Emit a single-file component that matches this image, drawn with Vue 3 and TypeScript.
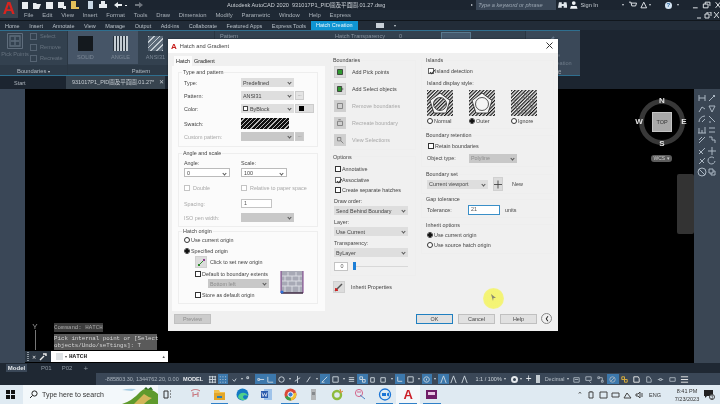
<script setup lang="ts">
const menus = ['File', 'Edit', 'View', 'Insert', 'Format', 'Tools', 'Draw', 'Dimension', 'Modify', 'Parametric', 'Window', 'Help', 'Express']
const tabs = ['Home', 'Insert', 'Annotate', 'View', 'Manage', 'Output', 'Add-ins', 'Collaborate', 'Featured Apps', 'Express Tools']
const thumbs = [
  { name: 'SOLID', cls: 'solid' },
  { name: 'ANGLE', cls: 'angle' }
]
const islands = [
  { name: 'Normal', on: false, inner: true, hatch: false },
  { name: 'Outer', on: true, inner: false, hatch: false },
  { name: 'Ignore', on: false, inner: false, hatch: true }
]
const boundaryBtns = [
  { text: 'Add Pick points', off: false, d: 'M3 3h6v6H3z', fill: '#2f9a2f' },
  { text: 'Add Select objects', off: false, d: 'M3 3h5v6H3zM8 6h2', fill: '#2f9a2f' },
  { text: 'Remove boundaries', off: true, d: 'M3 3h6v6H3z', fill: 'none' },
  { text: 'Recreate boundary', off: true, d: 'M3 4h6v5H3zM4 2h3', fill: 'none' },
  { text: 'View Selections', off: true, d: 'M3 3h4v4H3zM7 7l3 3', fill: 'none' }
]
const paletteIcons = [
  'M2 2v6M8 2v6M2 5h6', 'M2 8l6-6M6 2l2 2', 'M2 8l3-5 3 2', 'M2 2h6l-3 6z',
  'M2 8a6 6 0 0 1 6-6M5 8l3-3', 'M2 2l6 6M2 8h2', 'M2 8V3M5 8V5M8 8V2M1 8h8', 'M2 3h6M2 7h6',
  'M2 8l6-6M2 5l3-3', 'M2 2h3v3h3v3', 'M2 8l6-6M2 4l4 4', 'M5 1v8M1 5h8',
  'M2 8l6-6M3 3l4 4', 'M7 2a3.5 3.5 0 1 0 1 3', 'M1 5a4 4 0 1 0 8 0a4 4 0 1 0-8 0M2 2l6 6', 'M2 2h4v4H2zM4 6v2h4V4H6'
]
// status bar toggles, left to right; on = highlighted blue
const statusA = [
  { on: false, d: 'M1 2h8M1 5h8M1 8h8M2 1v8M5 1v8M8 1v8' },
  { on: true, d: 'M2 2h1M5 2h1M8 2h1M2 5h1M5 5h1M8 5h1M2 8h1M5 8h1M8 8h1' },
  { on: false, d: 'M4 5l2 2 2-3', caret: true },
  { on: false, d: 'M2 2h2v2H2z' },
  { on: true, d: 'M2 4h2v2H2zM4 5h5' },
  { on: true, d: 'M2 2v6h6' },
  { on: false, d: 'M2 5a3 3 0 1 0 6 0a3 3 0 1 0-6 0', caret: true },
  { on: false, d: 'M5 1v8M2 7l6-4' },
  { on: false, d: 'M3 8l4-6', caret: true },
  { on: true, d: 'M2 8l6-6M2 8h3' },
  { on: false, d: 'M2 2h6v6H2z', caret: true },
  { on: false, d: 'M2 3h6M2 5h6M2 7h6' },
  { on: true, d: 'M2 2h3v3H2zM5 5h3v3H5z' },
  { on: false, d: 'M3 3h4v5H3z' },
  { on: false, d: 'M2 3h5v5H2z', caret: true },
  { on: true, d: 'M3 2v5h5' },
  { on: false, d: 'M2 2h6v6H2z', caret: true },
  { on: true, d: 'M5 2a3 3 0 1 0 .1 0M5 4v2', caret: true },
  { on: true, d: 'M5 1L2 9M5 1l3 8' },
  { on: false, d: 'M5 1L2 9M5 1l3 8' },
  { on: false, d: 'M5 1L2 9M5 1l3 8' }
]
const statusB = [
  { on: false, d: 'M2 3h6v5H2zM3 5h4' },
  { on: false, d: 'M2 2h6v4H2zM6 7l2 2', caret: true },
  { on: false, d: 'M2 2h2v2H2zM6 6h2v2H6zM4 3h3v3' },
  { on: true, d: 'M2 5a3 3 0 1 0 6 0a3 3 0 1 0-6 0M3 7l4-4' },
  { on: false, d: 'M2 2h3v3H2zM5 5h3v3H5z', color: '#e5b53a' },
  { on: false, d: 'M2 2h5l1 2v4H2z', color: '#f0f0f0' },
  { on: false, d: 'M3 2h3l2 3v3H3z' },
  { on: false, d: 'M2 5h2M6 5h2M4 4h2v2H4z' },
  { on: false, d: 'M2 3h6v4H2z' },
  { on: false, d: 'M1 2h8M1 5h8M1 8h8', color: '#f0f0f0' }
]
const taskIcons = ['snip', 'files', 'edge', 'word', 'chrome', 'grey', 'green', 'pink', 'zoom', 'acad', 'purple']
const underlined = ['files', 'chrome', 'zoom', 'acad', 'purple']
const trayPaths = ['M2 2h4v6H2zM4 1v1', 'M1 2h7v6H1z', 'M1 3h7v4H1z', 'M1 8l3-5 4 5z', 'M1 4h2l2-2v6L3 6H1zM7 3v4']
</script>

<template>
  <div class="screen">
    <header class="titlebar">
      <div class="logo">A</div>
      <div class="qat">
        <svg width="122" height="10" viewBox="0 0 122 10" fill="#e8ecef">
          <path d="M1 2h6v7H1z" />
          <path d="M12 3h3l1 1h4l-2 5h-6z" />
          <path d="M25 2h7v7h-7z" />
          <path d="M37 2h6v6h-6zM42 6h3v3h-3z" />
          <path d="M50 1h5v8h-5zM55 7h3v2h-3z" fill="#e3c05a" />
          <path d="M67 1h5v8h-5z" fill="#c9d7e4" />
          <path d="M78 4h8v4h-8zM80 1h4v3h-4z" />
          <path d="M93 5l4-3v2h4v2h-4v2zM104 5h2v1h-2z" />
          <path d="M122 5l-4-3v2h-4v2h4v2z" opacity=".4" />
        </svg>
      </div>
      <span class="doc-title">Autodesk AutoCAD 2020&nbsp;&nbsp;931017P1_PID圖及平面圖.01.27.dwg</span>
      <span class="crumb"></span>
      <div class="search">Type a keyword or phrase</div>
      <svg class="ico-bino" width="10" height="8" viewBox="0 0 10 8" fill="#dfe5ea"><path d="M1 1h3v6H0zM6 1h3l1 6H6zM4 3h2v2H4z" /></svg>
      <svg class="ico-user" width="8" height="8" viewBox="0 0 8 8" fill="#f0f3f5"><path d="M4 0a2 2 0 0 1 0 4a2 2 0 0 1 0-4zM0 8l1-3h6l1 3z" /></svg>
      <span class="sign">Sign In</span>
      <span class="caret caret-sign"></span>
      <svg class="ico-cart" width="8" height="8" viewBox="0 0 8 8" fill="none" stroke="#e4e8ec"><path d="M0 1h2l1 4h4l1-3H2" /></svg>
      <svg class="ico-tri" width="8" height="8" viewBox="0 0 8 8" fill="none" stroke="#e4e8ec"><path d="M4 1l3 6H1z" /></svg>
      <span class="caret caret-tri"></span>
      <span class="help-dot">?</span>
      <span class="caret caret-help"></span>
      <svg class="win-btns" width="30" height="8" viewBox="0 0 30 8" fill="none" stroke="#e8ecef"><path d="M1 7h5M12 3h5v4h-5zM14 3V1h5v4M25 1l5 6M30 1l-5 6" /></svg>
    </header>

    <nav class="menubar">
      <span v-for="m in menus" :key="m">{{ m }}</span>
      <svg class="win-btns2" width="22" height="7" viewBox="0 0 22 7" fill="none" stroke="#d8dde2"><path d="M0 6h4M8 2h4v4H8zM10 2V0h4v4M17 0l5 6M22 0l-5 6" /></svg>
    </nav>

    <nav class="tabbar">
      <span v-for="t in tabs" :key="t">{{ t }}</span>
      <span class="tab-active">Hatch Creation</span>
      <svg class="cam" width="8" height="5" viewBox="0 0 8 5" fill="#c8d0d8"><path d="M0 0h8v5H0z" /></svg>
      <span class="caret"></span>
    </nav>

    <section class="ribbon">
      <div class="panel panel-bound">
        <div class="panel-body">
          <div class="pick">
            <svg width="16" height="16" viewBox="0 0 16 16" fill="none" stroke="#5f6d7c"><path d="M.5.5h15v15H.5z" /><path d="M3 3h10v10H3zM8 4v8M4 8h8" stroke-width="1.3" /></svg>
            <span>Pick Points</span>
          </div>
          <ul class="sel-list">
            <li v-for="s in ['Select', 'Remove', 'Recreate']" :key="s"><i></i>{{ s }}</li>
          </ul>
        </div>
        <div class="panel-foot">Boundaries <span class="caret"></span></div>
      </div>
      <div class="panel panel-pattern">
        <div class="thumbs">
          <div class="thumb-bg">
            <div v-for="t in thumbs" :key="t.name" class="thumb">
              <div class="swatch-img" :class="t.cls"></div>
              <span>{{ t.name }}</span>
            </div>
          </div>
          <div class="thumb">
            <div class="swatch-img ansi"></div>
            <span>ANSI31</span>
          </div>
        </div>
        <div class="panel-foot">Pattern</div>
      </div>
      <div class="panel panel-props">
        <span class="prop-a">Pattern</span>
        <span class="prop-b">Hatch Transparency</span>
        <span class="prop-c">0</span>
        <span class="prop-d"></span>
      </div>
      <div class="panel panel-close">
        <svg width="12" height="12" viewBox="0 0 12 12" fill="none" stroke="#66778a" stroke-width="2"><path d="M2 10l8-8" /></svg>
        <span>Close<br />Hatch Creation</span>
        <b>Close</b>
      </div>
    </section>

    <div class="doctabs">
      <span class="doc-start">Start</span>
      <span class="doc-active">931017P1_PID圖及平面圖.01.27* <em>✕</em></span>
    </div>

    <main class="work">
      <aside class="leftstrip"></aside>
      <div class="canvas">
        <div class="ucs">
          <span>Y</span>
          <i></i>
        </div>
        <div class="cmd-history">
          <p class="first">Command: HATCH</p>
          <p>Pick internal point or [Select<br />objects/Undo/seTtings]: T</p>
        </div>
        <div class="cmd-bar">
          <div class="cmd-tools">
            <i class="grip"></i>
            <span>✕</span>
            <svg width="8" height="8" viewBox="0 0 8 8" stroke="#f0f0f0" stroke-width="1.4" fill="none"><path d="M1 7l4-4M4 1h3v2" /></svg>
          </div>
          <div class="cmd-input">
            <i class="cmd-box"></i>
            <span class="caret dark"></span>
            <b>HATCH</b>
            <span class="up">▲</span>
          </div>
        </div>

        <div class="compass">
          <div class="ring"></div>
          <div class="cube">TOP</div>
          <b class="n">N</b>
          <b class="s">S</b>
          <b class="e">E</b>
          <b class="w">W</b>
        </div>
        <div class="wcs">WCS ▾</div>
        <div class="nav-stub"></div>
      </div>
      <aside class="palette">
        <svg v-for="(d, i) in paletteIcons" :key="i" width="10" height="10" viewBox="0 0 10 10" fill="none" stroke="#aab6c2">
          <path :d="d" />
        </svg>
      </aside>
    </main>

    <div class="layouts">
      <span class="lay-model">Model</span>
      <span>P01</span>
      <span>P02</span>
      <span class="plus">+</span>
    </div>

    <div class="status">
      <div class="status-left"></div>
      <div class="status-main">
        <span class="coords">-885803.30, 1344762.20, 0.00</span>
        <b class="model">MODEL</b>
        <template v-for="(s, i) in statusA" :key="i">
          <span class="st" :class="{ on: s.on }">
            <svg width="9" height="9" viewBox="0 0 10 10" fill="none" stroke="#cfd8e0"><path :d="s.d" /></svg>
          </span>
          <span v-if="s.caret" class="caret small"></span>
        </template>
        <span class="scale">1:1 / 100%</span>
        <span class="caret small"></span>
        <span class="gear"></span>
        <span class="caret small"></span>
        <span class="st-plus">+</span>
        <i class="slab"></i>
        <span class="decimal">Decimal</span>
        <span class="caret small"></span>
        <span v-for="(s, i) in statusB" :key="'b' + i" class="st wide" :class="{ on: s.on }">
          <svg width="9" height="9" viewBox="0 0 10 10" fill="none" :stroke="s.color || '#aab4be'"><path :d="s.d" /></svg>
        </span>
      </div>
    </div>

    <footer class="taskbar">
      <svg class="winlogo" width="9" height="9" viewBox="0 0 9 9" fill="#111"><path d="M0 0h4v4H0zM5 0h4v4H5zM0 5h4v4H0zM5 5h4v4H5z" /></svg>
      <div class="tb-search">
        <svg width="9" height="9" viewBox="0 0 9 9" fill="none" stroke="#222"><circle cx="5.5" cy="3.5" r="2.6" /><path d="M3.5 5.5L1 8" /></svg>
        <span>Type here to search</span>
        <svg class="hills" width="36" height="19" viewBox="0 0 36 19">
          <rect width="36" height="19" fill="#f4f8fa" />
          <path d="M0 5q6-2 14-1l-4 2z" fill="#a8cde3" />
          <path d="M0 19q10-3 18-12q4-4 8-3q4 0 10 5v10z" fill="#5f9a2c" />
          <path d="M12 19q6-6 10-10q4 3 8 4q-4 2-8 6z" fill="#d2b65a" />
          <path d="M22 4l2-2 2 2 3-2 2 3z" fill="#2e6a24" />
        </svg>
      </div>
      <svg class="taskview" width="9" height="9" viewBox="0 0 9 9" fill="none" stroke="#333"><path d="M1 1h4v7H1zM7 1h1M7 4h1M7 7h1" /></svg>
      <div class="apps">
        <span v-for="a in taskIcons" :key="a" class="app" :class="[a, { under: underlined.includes(a) }]">
          <svg v-if="a === 'snip'" width="13" height="13" viewBox="0 0 13 13" fill="none" stroke="#c66f77"><path d="M2 3c3-2 6-2 9 0M4 4v5M9 4v5M4 7l5-1" /></svg>
          <svg v-else-if="a === 'files'" width="13" height="13" viewBox="0 0 13 13"><path d="M1 2h5l1 2h5v2H1z" fill="#f2c14e" /><path d="M1 5h11v7H1z" fill="#e2a62a" /><path d="M4 8h5v2H4z" fill="#2a7fb8" /></svg>
          <svg v-else-if="a === 'edge'" width="13" height="13" viewBox="0 0 13 13"><circle cx="6.5" cy="6.5" r="6" fill="#1479c4" /><path d="M2 9c1-5 8-6 10-1-2-1-5-1-5 1 0 2 3 3 5 1-2 3-8 3-10-1z" fill="#4fd08a" /></svg>
          <svg v-else-if="a === 'word'" width="13" height="13" viewBox="0 0 13 13"><path d="M4 1h8v11H4z" fill="#9ec3ea" /><path d="M1 3h7v7H1z" fill="#2b5cad" /><path d="M2 4.5l1 4 1.5-3 1.5 3 1-4" fill="none" stroke="#fff" stroke-width=".7" /></svg>
          <svg v-else-if="a === 'chrome'" width="13" height="13" viewBox="0 0 13 13"><circle cx="6.5" cy="6.5" r="6" fill="#d94a3a" /><path d="M6.5 6.5L1 9a6 6 0 0 0 6 3.5z" fill="#3ca24a" /><path d="M6.5 6.5L7 12.5a6 6 0 0 0 5-8z" fill="#f1c232" /><circle cx="6.5" cy="6.5" r="2.6" fill="#3d7fd6" stroke="#fff" /></svg>
          <svg v-else-if="a === 'grey'" width="13" height="13" viewBox="0 0 13 13"><path d="M4 1h5v11H4z" fill="#b3b6b9" /><path d="M5 4h3v3H5z" fill="#85898d" /></svg>
          <svg v-else-if="a === 'green'" width="13" height="13" viewBox="0 0 13 13" fill="none"><circle cx="6" cy="7" r="4" stroke="#8dbb3b" stroke-width="2.4" /><path d="M9 1l1 3M12 3L9 5" stroke="#e0823c" /></svg>
          <svg v-else-if="a === 'pink'" width="13" height="13" viewBox="0 0 13 13" fill="none" stroke="#d4668c"><circle cx="5" cy="5" r="3.6" /><path d="M6 7l5 4" stroke="#4b82c4" /><path d="M3 4h4" /></svg>
          <svg v-else-if="a === 'zoom'" width="14" height="13" viewBox="0 0 14 13" fill="none"><circle cx="7" cy="6.5" r="5.5" stroke="#1a74d6" stroke-width="1.3" /><path d="M4 5h4v3H4zM9 5.500l2-1v4l-2-1z" fill="#1a74d6" /></svg>
          <span v-else-if="a === 'acad'" class="acad-a">A</span>
          <svg v-else width="13" height="13" viewBox="0 0 13 13"><path d="M1 2h11v9H1z" fill="#6e1e68" /><path d="M3 4h7v3H3z" fill="#e8c6e4" /></svg>
        </span>
      </div>
      <div class="tray">
        <span class="chev">⌃</span>
        <svg v-for="(d, i) in trayPaths" :key="i" width="9" height="9" viewBox="0 0 9 9" fill="none" stroke="#444"><path :d="d" /></svg>
        <span class="eng">ENG</span>
        <span class="clock">8:41 PM<br />7/23/2023</span>
        <span class="notify">
          <svg width="10" height="9" viewBox="0 0 10 9" fill="#222"><path d="M0 0h9v6H3L1 8V6H0z" /></svg>
          <em>3</em>
        </span>
      </div>
    </footer>

    <!-- dialog window -->
    <div class="dialog">
      <div class="dlg-head">
        <span class="dlg-logo">A</span>
        <span>Hatch and Gradient</span>
        <svg class="dlg-close" width="7" height="7" viewBox="0 0 7 7" stroke="#333" fill="none"><path d="M.5.500l6 6M6.500.500l-6 6" /></svg>
      </div>
      <div class="dlg-body">
        <div class="col-one">
          <div class="dtabs"><span class="dtab on">Hatch</span><span class="dtab">Gradient</span></div>
          <div class="dpanel">
            <fieldset class="group g-type">
              <legend>Type and pattern</legend>
              <div class="row"><label>Type:</label><div class="select w53">Predefined</div></div>
              <div class="row"><label>Pattern:</label><div class="select w53">ANSI31</div><i class="mini">...</i></div>
              <div class="row"><label>Color:</label><div class="select w53 colr"><u></u>ByBlock</div><i class="mini swatchbtn"><s></s></i></div>
              <div class="row swatchrow"><label>Swatch:</label><div class="swatch"></div></div>
              <div class="row off"><label>Custom pattern:</label><div class="select w53 dis"></div><i class="mini dis">...</i></div>
            </fieldset>
            <fieldset class="group g-angle">
              <legend>Angle and scale</legend>
              <div class="pair">
                <div><label>Angle:</label><div class="select box w46">0</div></div>
                <div><label>Scale:</label><div class="select box w46">100</div></div>
              </div>
              <div class="row off dbl">
                <label class="chk"><i class="cb dim"></i>Double</label>
                <label class="chk"><i class="cb dim"></i>Relative to paper space</label>
              </div>
              <div class="row off spc"><label>Spacing:</label><div class="field w31">1</div></div>
              <div class="row off"><label>ISO pen width:</label><div class="select w53 dis"></div></div>
            </fieldset>
            <fieldset class="group g-origin">
              <legend>Hatch origin</legend>
              <div class="line"><i class="rb"></i>Use current origin</div>
              <div class="line"><i class="rb on"></i>Specified origin</div>
              <div class="origin-inner">
                <div class="set-row">
                  <span class="sq-btn">
                    <svg width="9" height="9" viewBox="0 0 9 9" fill="none"><path d="M1 8l6-6" stroke="#2c8a2c" /><path d="M1 6h2v2H1z" fill="#2c8a2c" /><path d="M6 1h2v2H6z" fill="#8c3a8c" /></svg>
                  </span>
                  Click to set new origin
                </div>
                <div class="def-wrap">
                  <div class="def-left">
                    <div class="line tight"><i class="cb"></i>Default to boundary extents</div>
                    <div class="select bl dis">Bottom left</div>
                    <div class="line tight"><i class="cb"></i>Store as default origin</div>
                  </div>
                  <svg class="brick" width="24" height="24" viewBox="0 0 24 24">
                    <rect x="1" y="1" width="22" height="22" fill="#a7a9b5" />
                    <path d="M2 6h20M2 11h20M2 16h20M8 2v4M16 2v4M5 6v5M12 6v5M19 6v5M8 11v5M16 11v5M5 16v6M12 16v6M19 16v6" stroke="#dfe0e6" stroke-width=".9" fill="none" />
                    <path d="M1 1v22h22V1" stroke="#7a3a86" fill="none" />
                    <path d="M1 23h22" stroke="#222" />
                    <circle cx="2" cy="22" r="1.500" fill="#2c6fd6" />
                  </svg>
                </div>
              </div>
            </fieldset>
          </div>
        </div>

        <div class="col-two">
          <fieldset class="group g-bound">
            <legend>Boundaries</legend>
            <div v-for="b in boundaryBtns" :key="b.text" class="bound-row" :class="{ off: b.off }">
              <span class="sq-btn" :class="{ dimbtn: b.off }">
                <svg width="10" height="10" viewBox="0 0 12 12" :fill="b.fill" :stroke="b.off ? '#777' : '#333'"><path :d="b.d" /></svg>
              </span>
              {{ b.text }}
            </div>
          </fieldset>
          <fieldset class="group g-options">
            <legend>Options</legend>
            <div class="line chkline"><i class="cb"></i>Annotative</div>
            <div class="line chkline"><i class="cb ck"></i>Associative</div>
            <div class="line chkline"><i class="cb"></i>Create separate hatches</div>
            <div class="sub">Draw order:</div>
            <div class="select w74">Send Behind Boundary</div>
            <div class="sub">Layer:</div>
            <div class="select w74">Use Current</div>
            <div class="sub">Transparency:</div>
            <div class="select w74">ByLayer</div>
            <div class="trans">
              <div class="field zero">0</div>
              <div class="slider"><i></i></div>
            </div>
          </fieldset>
          <div class="inherit">
            <span class="sq-btn">
              <svg width="10" height="10" viewBox="0 0 10 10" fill="none"><path d="M1 9l7-7" stroke="#555" stroke-width="1.4" /><path d="M1 6c2 0 3 1 3 3H1z" fill="#c22" /></svg>
            </span>
            Inherit Properties
          </div>
        </div>

        <div class="col-three">
          <fieldset class="group g-islands">
            <legend>Islands</legend>
            <div class="line chkline"><i class="cb ck"></i>Island detection</div>
            <div class="sub">Island display style:</div>
            <div class="isl-row">
              <div v-for="isl in islands" :key="isl.name" class="isl">
                <svg width="26" height="26" viewBox="0 0 26 26">
                  <defs>
                    <pattern :id="'ph' + isl.name" width="2.500" height="2.500" patternUnits="userSpaceOnUse" patternTransform="rotate(45)">
                      <rect width="2.500" height="2.500" fill="#f4f4f4" />
                      <rect width="1.200" height="2.500" fill="#111" />
                    </pattern>
                  </defs>
                  <rect width="26" height="26" :fill="`url(#ph${isl.name})`" />
                  <path d="M13 3l10 7.500-4 12.500H7L3 10.500z" :fill="isl.hatch ? `url(#ph${isl.name})` : '#f4f4f4'" :stroke="isl.hatch ? '#666' : '#111'" stroke-width=".7" />
                  <circle cx="13" cy="14" r="6.500" :fill="isl.inner ? `url(#ph${isl.name})` : isl.hatch ? 'none' : '#f4f4f4'" :stroke="isl.hatch ? '#666' : '#111'" stroke-width=".7" />
                </svg>
                <div class="line isl-label"><i class="rb" :class="{ on: isl.on }"></i>{{ isl.name }}</div>
              </div>
            </div>
          </fieldset>
          <fieldset class="group g-ret">
            <legend>Boundary retention</legend>
            <div class="line chkline"><i class="cb"></i>Retain boundaries</div>
            <div class="row obj"><label>Object type:</label><div class="select dis w48">Polyline</div></div>
          </fieldset>
          <fieldset class="group g-set">
            <legend>Boundary set</legend>
            <div class="set-line">
              <div class="select w61">Current viewport</div>
              <span class="sq-btn new-btn">
                <svg width="9" height="9" viewBox="0 0 9 9" stroke="#444" fill="none"><path d="M4.500 0v9M0 4.500h9" /></svg>
              </span>
              <span class="newlab">New</span>
            </div>
          </fieldset>
          <fieldset class="group g-gap">
            <legend>Gap tolerance</legend>
            <div class="row tol"><label>Tolerance:</label><div class="field active">21</div><span>units</span></div>
          </fieldset>
          <fieldset class="group g-inh">
            <legend>Inherit options</legend>
            <div class="line"><i class="rb on"></i>Use current origin</div>
            <div class="line"><i class="rb"></i>Use source hatch origin</div>
          </fieldset>
        </div>
      </div>
      <div class="dlg-foot">
        <button class="btn dis">Preview</button>
        <span class="foot-space"></span>
        <button class="btn ok">OK</button>
        <button class="btn">Cancel</button>
        <button class="btn">Help</button>
        <span class="more">❮</span>
      </div>
    </div>

    <!-- cursor highlight from the screen recorder -->
    <div class="spot">
      <svg width="5" height="7" viewBox="0 0 5 7" fill="#8a8a70"><path d="M0 0l5 4H2.500L2 7z" /></svg>
    </div>
  </div>
</template>

<style>
html,
body {
  margin: 0;
  background: #000;
}
</style>

<style scoped>
* {
  box-sizing: border-box;
}

.screen {
  position: relative;
  width: 720px;
  height: 404px;
  overflow: hidden;
  display: flex;
  flex-direction: column;
  font-family: "Liberation Sans", Arial, "Noto Sans CJK TC", sans-serif;
  font-size: 5.4px;
  color: #333;
  background: #1c2530;
  filter: blur(0.35px);
}

.caret {
  display: inline-block;
  width: 0;
  height: 0;
  border-left: 1.5px solid transparent;
  border-right: 1.5px solid transparent;
  border-top: 2px solid #cfd5da;
}

.caret.dark {
  border-top-color: #444;
}

.caret.small {
  margin: 0 2px;
}

/* title bar */
.titlebar {
  position: relative;
  height: 10px;
  flex: none;
  display: flex;
  align-items: center;
  background: #1c2530;
  color: #c9ced4;
  font-size: 5.6px;
}

.logo {
  position: absolute;
  left: 0;
  top: 0;
  width: 18px;
  height: 18px;
  background: #39444f;
  color: #d8241f;
  font-size: 17px;
  font-weight: 700;
  line-height: 18px;
  text-align: center;
  z-index: 2;
}

.qat {
  margin-left: 21px;
  width: 122px;
  line-height: 0;
}

.doc-title {
  margin-left: 84px;
  width: 160px;
  white-space: nowrap;
}

.crumb {
  margin-left: 86px;
  border-left: 2px solid #cfd5da;
  border-top: 1.5px solid transparent;
  border-bottom: 1.5px solid transparent;
}

.search {
  margin-left: 3px;
  width: 84px;
  height: 10px;
  padding-left: 2px;
  line-height: 10px;
  background: #3a4757;
  color: #9aa6b2;
  font-style: italic;
  font-size: 5.6px;
}

.ico-bino {
  margin-left: 2px;
}

.ico-user {
  margin-left: 3px;
}

.sign {
  margin-left: 3px;
  white-space: nowrap;
}

.caret-sign {
  margin-left: 24px;
}

.ico-cart {
  margin-left: 5px;
}

.ico-tri {
  margin-left: 3px;
}

.caret-tri {
  margin-left: 2px;
}

.help-dot {
  margin-left: 14px;
  width: 7px;
  height: 7px;
  border-radius: 50%;
  background: #d5e4f2;
  color: #1d5f9c;
  font-size: 6px;
  font-weight: 700;
  line-height: 7px;
  text-align: center;
}

.caret-help {
  margin-left: 5px;
}

.win-btns {
  margin-left: 13px;
}

/* menu + ribbon tabs */
.menubar {
  position: relative;
  height: 11px;
  flex: none;
  padding-left: 24px;
  display: flex;
  align-items: center;
  gap: 8.8px;
  background: #1f2935;
  color: #aab2ba;
  font-size: 5.9px;
  border-bottom: 1px solid #11171d;
}

.win-btns2 {
  position: absolute;
  right: 1px;
  top: 2px;
}

.tabbar {
  height: 9px;
  flex: none;
  padding-left: 5px;
  display: flex;
  align-items: center;
  gap: 9.5px;
  background: #222c38;
  color: #b8c0c8;
  font-size: 5.5px;
}

.tab-active {
  height: 9px;
  padding: 0 5px;
  margin-left: -4.5px;
  line-height: 9px;
  background: #0f95d3;
  color: #e8f6fc;
}

.cam {
  margin-left: 9px;
}

/* ribbon */
.ribbon {
  height: 46px;
  width: 580px;
  flex: none;
  display: flex;
  background: #33414f;
  color: #66727f;
  font-size: 5.6px;
  border-top: 1px solid #2f6f8f;
  border-bottom: 1px solid #2f6f8f;
}

.panel {
  position: relative;
  display: flex;
  flex-direction: column;
  border-right: 1px solid #2a3642;
}

.panel-bound {
  width: 68px;
}

.panel-body {
  flex: 1;
  display: flex;
}

.pick {
  width: 30px;
  padding-top: 2px;
  display: flex;
  flex-direction: column;
  align-items: center;
  gap: 2px;
  white-space: nowrap;
}

.sel-list {
  list-style: none;
  margin: 1px 0 0;
  padding: 0;
  display: flex;
  flex-direction: column;
  gap: 3px;
}

.sel-list li {
  display: flex;
  align-items: center;
  gap: 3px;
  height: 8px;
}

.sel-list i {
  width: 7px;
  height: 7px;
  border: 1px solid #566473;
}

.panel-foot {
  height: 10px;
  line-height: 13px;
  text-align: center;
  background: #2c3946;
  color: #b0b9c2;
  font-size: 5.8px;
}

.panel-pattern {
  width: 147px;
}

.thumbs {
  flex: 1;
  display: flex;
}

.thumb-bg {
  display: flex;
  background: #465567;
  width: 70px;
  height: 33px;
}

.thumb {
  width: 35px;
  padding-top: 5px;
  display: flex;
  flex-direction: column;
  align-items: center;
  gap: 3px;
  color: #7c8896;
}

.swatch-img {
  width: 15px;
  height: 15px;
}

.solid {
  background: #14191e;
}

.angle {
  background: repeating-linear-gradient(90deg, #26303a 0 1px, #c4ccd2 1px 3px);
}

.ansi {
  background: repeating-linear-gradient(135deg, #c4ccd2 0 1px, #5c6a78 1px 4px);
}

.panel-props {
  width: 311px;
  color: #8b96a2;
}

.prop-a {
  position: absolute;
  left: 5px;
  top: 2px;
}

.prop-b {
  position: absolute;
  left: 120px;
  top: 2px;
  white-space: nowrap;
}

.prop-c {
  position: absolute;
  left: 184px;
  top: 2px;
}

.prop-d {
  position: absolute;
  left: 226px;
  top: 1px;
  width: 30px;
  height: 8px;
  border: 1px solid #5a7a90;
  background: #44586c;
}

.panel-close {
  flex: 1;
  padding-top: 4px;
  background: #3a4858;
  color: #6f7c8a;
  border: 0;
  text-align: center;
}

.panel-close svg {
  margin-left: 18px;
}

.panel-close span {
  display: block;
  margin-top: 4px;
  line-height: 8px;
  white-space: nowrap;
}

.panel-close b {
  position: absolute;
  left: 0;
  right: 0;
  bottom: 0;
  color: #a4adb6;
  font-weight: 400;
  font-size: 6.6px;
}

.doctabs {
  height: 13px;
  flex: none;
  display: flex;
  align-items: center;
  background: #1c2530;
  color: #aeb6be;
  font-size: 5.5px;
}

.doc-start {
  margin-left: 14px;
  width: 52px;
}

.doc-active {
  height: 13px;
  width: 99px;
  padding-left: 6px;
  line-height: 13px;
  background: #38444f;
  color: #c6ccd2;
  white-space: nowrap;
}

.doc-active em {
  margin-left: 3px;
  font-style: normal;
}

/* work area */
.work {
  flex: 1;
  min-height: 0;
  display: flex;
}

.leftstrip {
  width: 25px;
  background: #3a4757;
}

.canvas {
  position: relative;
  flex: 1;
  background: #000;
}

.palette {
  width: 26px;
  padding: 4px 3px;
  display: grid;
  grid-template-columns: 10px 10px;
  grid-auto-rows: 10.5px;
  justify-content: space-between;
  align-content: start;
  background: #3a4654;
}

.ucs {
  position: absolute;
  left: 5px;
  top: 234px;
  width: 10px;
  color: #9a9a9a;
  font-size: 8px;
  text-align: center;
}

.ucs span {
  display: block;
  line-height: 7px;
}

.ucs i {
  display: block;
  width: 1px;
  height: 20px;
  margin-left: 5px;
  background: #777;
}

.cmd-history {
  position: absolute;
  left: 29px;
  top: 234px;
  font-family: "Liberation Mono", monospace;
  font-size: 5.8px;
  color: #d5d5d5;
}

.cmd-history p {
  margin: 0 0 2px;
  width: 103px;
  padding: 1px 0 1px 0;
  line-height: 7px;
  background: #5a5a5a;
  white-space: nowrap;
}

.cmd-history p.first {
  width: 49px;
  color: #aaa;
  background: #3d3d3d;
}

.cmd-bar {
  position: absolute;
  left: 0;
  top: 262px;
  width: 143px;
  height: 11px;
  display: flex;
}

.cmd-tools {
  width: 26px;
  display: flex;
  align-items: center;
  gap: 3px;
  padding-left: 2px;
  background: #2c3743;
  color: #f0f0f0;
}

.grip {
  width: 2px;
  height: 9px;
  background: repeating-linear-gradient(#8a949e 0 1px, transparent 1px 2px);
}

.cmd-input {
  flex: 1;
  display: flex;
  align-items: center;
  gap: 2px;
  padding: 0 3px;
  background: #fff;
  color: #222;
  font-family: "Liberation Mono", monospace;
  font-size: 6px;
}

.cmd-box {
  width: 7px;
  height: 7px;
  margin-left: 2px;
  background: #dfe3e6;
}

.cmd-input .up {
  margin-left: auto;
  font-size: 4px;
  color: #555;
}

.compass {
  position: absolute;
  left: 614px;
  top: 10px;
  width: 46px;
  height: 46px;
  color: #e2e2e2;
  font-size: 8px;
}

.ring {
  position: absolute;
  left: 0;
  top: 0;
  width: 46px;
  height: 46px;
  border: 5px solid #383838;
  border-radius: 50%;
}

.cube {
  position: absolute;
  left: 13px;
  top: 13px;
  width: 20px;
  height: 20px;
  background: #a8a8a8;
  border: 1px solid #c4c4c4;
  color: #333;
  font-size: 5.5px;
  line-height: 18px;
  text-align: center;
}

.compass b {
  position: absolute;
  width: 10px;
  line-height: 9px;
  text-align: center;
}

.n {
  left: 18px;
  top: -3px;
}

.s {
  left: 18px;
  bottom: -3px;
}

.e {
  right: -4px;
  top: 18px;
}

.w {
  left: -5px;
  top: 18px;
}

.wcs {
  position: absolute;
  left: 626px;
  top: 66px;
  width: 21px;
  height: 7px;
  border-radius: 3px;
  background: #5c5c5c;
  color: #cfcfcf;
  font-size: 5px;
  line-height: 7px;
  text-align: center;
}

.nav-stub {
  position: absolute;
  left: 652px;
  top: 85px;
  width: 17px;
  height: 60px;
  border-radius: 2px;
  background: #333;
}

/* bottom bars */
.layouts {
  height: 10px;
  flex: none;
  padding-left: 6px;
  display: flex;
  align-items: center;
  gap: 10px;
  background: #1f2833;
  color: #8e98a2;
  font-size: 6px;
}

.lay-model {
  width: 21px;
  padding: 1px 0;
  margin-right: 4px;
  background: #3a4757;
  color: #e2e6ea;
  font-weight: 700;
  text-align: center;
}

.plus {
  font-size: 8px;
  margin-left: 1px;
}

.status {
  height: 12px;
  flex: none;
  display: flex;
  background: #1f2833;
}

.status-left {
  width: 96px;
}

.status-main {
  flex: 1;
  min-width: 0;
  display: flex;
  align-items: center;
  overflow: hidden;
  background: #3a4757;
  color: #aab4be;
  font-size: 5.5px;
}

.coords {
  margin-left: 9px;
  width: 78px;
  white-space: nowrap;
}

.model {
  width: 24px;
  color: #e4e8ec;
  font-size: 5.6px;
}

.st {
  width: 10.5px;
  height: 10px;
  flex: none;
  display: flex;
  align-items: center;
  justify-content: center;
}

.st.on {
  background: #3c78ac;
}

.st.wide {
  width: 12px;
}

.scale {
  margin-left: 6px;
  color: #ccd4da;
  white-space: nowrap;
}

.gear {
  width: 7px;
  height: 7px;
  margin-left: 3px;
  border: 2px solid #e4e8ec;
  border-radius: 50%;
}

.st-plus {
  margin-left: 2px;
  color: #e4e8ec;
  font-size: 10px;
  line-height: 8px;
}

.slab {
  width: 4px;
  height: 8px;
  margin-left: 4px;
  background: #c4ccd2;
}

.decimal {
  margin-left: 5px;
  color: #b5bec6;
}

.taskbar {
  height: 19px;
  flex: none;
  display: flex;
  align-items: center;
  background: #dfeaf2;
}

.winlogo {
  margin-left: 6px;
}

.tb-search {
  position: relative;
  margin-left: 8px;
  width: 135px;
  height: 19px;
  padding-left: 6px;
  display: flex;
  align-items: center;
  gap: 4px;
  background: #f3f8fb;
  color: #333;
  font-size: 7px;
}

.hills {
  margin-left: auto;
}

.taskview {
  margin-left: 5px;
}

.apps {
  margin-left: 12px;
  display: flex;
}

.app {
  position: relative;
  width: 23.600px;
  height: 19px;
  display: flex;
  align-items: center;
  justify-content: center;
}

.app.under::after {
  content: "";
  position: absolute;
  left: 3px;
  right: 3px;
  bottom: 0;
  height: 1px;
  background: #2f80c8;
}

.app.acad {
  background: #f3f7fa;
}

.acad-a {
  color: #cc1f28;
  font-size: 13px;
  font-weight: 700;
}

.tray {
  margin-left: auto;
  padding-right: 4px;
  display: flex;
  align-items: center;
  gap: 3px;
  color: #333;
}

.chev {
  font-size: 7px;
  margin-right: 1px;
}

.eng {
  margin-left: 2px;
  font-size: 5.5px;
}

.clock {
  margin-left: 9px;
  width: 28px;
  font-size: 5.5px;
  line-height: 8px;
  text-align: center;
}

.notify {
  position: relative;
  margin-left: 0;
  width: 12px;
  font-size: 5px;
}

.notify em {
  position: absolute;
  left: 5px;
  top: 4px;
  width: 6px;
  height: 6px;
  border: 1px solid #444;
  border-radius: 50%;
  background: #dfeaf2;
  font-style: normal;
  line-height: 4px;
  text-align: center;
}

/* dialog */
.dialog {
  position: absolute;
  left: 168px;
  top: 39px;
  width: 390px;
  height: 292px;
  display: flex;
  flex-direction: column;
  background: #f0f0f0;
  box-shadow: 0 0 2px rgba(0, 0, 0, 0.4);
}

.dlg-head {
  position: relative;
  height: 14px;
  flex: none;
  padding-left: 3px;
  display: flex;
  align-items: center;
  gap: 3px;
  background: #fff;
  color: #444;
  font-size: 5.7px;
}

.dlg-logo {
  color: #c8201e;
  font-size: 8px;
  font-weight: 700;
}

.dlg-close {
  position: absolute;
  right: 5px;
  top: 3px;
}

.dlg-body {
  flex: 1;
  min-height: 0;
  padding: 3px 3px 0 4px;
  display: flex;
  gap: 5px;
}

.col-one {
  width: 153px;
  display: flex;
  flex-direction: column;
}

.dtabs {
  height: 10px;
  padding-left: 2px;
  display: flex;
  color: #222;
}

.dtab {
  padding: 1px 2px;
  line-height: 8px;
}

.dtab.on {
  width: 18px;
  background: #fbfbfb;
  text-align: center;
}

.dpanel {
  flex: 1;
  padding: 2px 7px 0 6px;
  background: #fbfbfb;
}

.group {
  margin: 0;
  padding: 0 0 0 5px;
  min-width: 0;
  border: 1px solid #eeeeee;
}

.group legend {
  padding: 0 1px;
  margin-left: -2px;
  color: #444;
  line-height: 8px;
  font-size: 5.4px;
}

label {
  color: #444;
}

.row {
  height: 13px;
  display: flex;
  align-items: center;
}

.row > label:first-child {
  width: 57px;
  flex: none;
  white-space: nowrap;
}

.off,
.off label {
  color: #a8a8a8;
}

.swatchrow {
  margin-top: 2px;
}

.select {
  position: relative;
  height: 9px;
  padding-left: 2px;
  display: flex;
  align-items: center;
  background: #dedede;
  color: #444;
  white-space: nowrap;
  flex: none;
}

.select::after {
  content: "";
  position: absolute;
  right: 3px;
  top: 3px;
  width: 2px;
  height: 2px;
  border-right: 0.7px solid #555;
  border-bottom: 0.7px solid #555;
  transform: rotate(45deg);
}

.select.box {
  background: #fff;
  border: 1px solid #bbb;
}

.select.dis {
  background: #c8c8c8;
  color: #8c8c8c;
}

.w53 {
  width: 53px;
}

.w46 {
  width: 46px;
}

.w74 {
  width: 74px;
}

.w48 {
  width: 48px;
}

.w61 {
  width: 61px;
}

.colr u {
  width: 5px;
  height: 5px;
  margin-right: 2px;
  background: #fff;
  border: 0.5px solid #444;
}

.mini {
  width: 9px;
  height: 9px;
  margin-left: 1px;
  background: #e4e4e4;
  border: 1px solid #ccc;
  color: #777;
  font-size: 5px;
  font-style: normal;
  line-height: 5px;
  text-align: center;
}

.mini.dis {
  background: #c8c8c8;
}

.swatchbtn {
  width: 19px;
  padding: 1px 0 0 3px;
  background: #dedede;
}

.swatchbtn s {
  display: block;
  width: 5px;
  height: 5px;
  background: #000;
}

.swatch {
  width: 48px;
  height: 11px;
  background: repeating-linear-gradient(135deg, #111 0 2px, #b8b8b8 2px 3px);
}

.g-type {
  padding-bottom: 3px;
}

.g-angle {
  margin-top: 2px;
  padding-bottom: 2px;
}

.pair {
  display: flex;
  gap: 11px;
  margin-top: 2px;
}

.pair label {
  display: block;
  height: 9px;
  line-height: 9px;
}

.dbl {
  height: 13px;
  margin-top: 4px;
}

.dbl .chk {
  display: flex;
  align-items: center;
  gap: 2px;
  color: #a8a8a8;
}

.dbl .chk:first-child {
  width: 57px;
}

.spc {
  height: 15px;
  margin-top: 2px;
}

.field {
  height: 9px;
  padding-left: 2px;
  border: 1px solid #c4c4c4;
  background: #fff;
  color: #555;
  line-height: 7px;
}

.w31 {
  width: 31px;
}

.cb {
  flex: none;
  width: 6px;
  height: 6px;
  margin-right: 1px;
  border: 0.8px solid #333;
  background: #fff;
}

.cb.dim {
  border-color: #c4c4c4;
}

.cb.ck {
  position: relative;
  border-color: #666;
}

.cb.ck::after {
  content: "";
  position: absolute;
  left: 1.500px;
  top: 0;
  width: 2px;
  height: 3.500px;
  border-right: 0.8px solid #333;
  border-bottom: 0.8px solid #333;
  transform: rotate(40deg);
}

.rb {
  flex: none;
  width: 6px;
  height: 6px;
  margin-right: 1px;
  border: 0.7px solid #333;
  border-radius: 50%;
  background: #fff;
}

.rb.on {
  background: radial-gradient(circle, #111 0 1.800px, #fff 2.200px);
}

.line {
  height: 10.500px;
  display: flex;
  align-items: center;
  color: #444;
  white-space: nowrap;
}

.g-origin {
  margin-top: 0;
  padding-bottom: 3px;
}

.origin-inner {
  padding-left: 11px;
}

.set-row {
  height: 12px;
  display: flex;
  align-items: center;
  gap: 3px;
  color: #444;
}

.sq-btn {
  flex: none;
  width: 12px;
  height: 12px;
  display: flex;
  align-items: center;
  justify-content: center;
  background: #dcdcdc;
  border: 1px solid #d0d0d0;
}

.def-wrap {
  display: flex;
}

.def-left {
  width: 85px;
}

.tight {
  height: 11px;
}

.select.bl {
  width: 61px;
  margin: 0 0 1px 13px;
}

.brick {
  margin-top: 2px;
}

.col-two {
  width: 86px;
  display: flex;
  flex-direction: column;
}

.g-bound {
  padding: 0 0 1px 3px;
}

.bound-row {
  height: 16.800px;
  display: flex;
  align-items: center;
  gap: 6px;
  color: #444;
  white-space: nowrap;
}

.sq-btn.dimbtn {
  background: #cfcfcf;
}

.bound-row.off {
  color: #a8a8a8;
}

.g-options {
  margin-top: 3px;
  padding: 3px 0 4px 3px;
}

.chkline {
  padding-left: 1px;
}

.sub {
  margin-top: 2px;
  height: 9px;
  line-height: 9px;
  color: #444;
}

.g-options .select {
  background: #dedede;
}

.g-options .select + .sub {
  margin-top: 3px;
}

.trans {
  margin-top: 5px;
  display: flex;
  align-items: center;
  gap: 5px;
}

.zero {
  width: 14px;
  text-align: center;
}

.slider {
  position: relative;
  width: 55px;
  height: 1px;
  background: #d8d8d8;
}

.slider i {
  position: absolute;
  left: 0;
  top: -4px;
  width: 3px;
  height: 8px;
  background: #1c7ed6;
}

.inherit {
  margin-top: 5px;
  margin-left: 3px;
  display: flex;
  align-items: center;
  gap: 6px;
  color: #444;
}

.col-three {
  width: 133px;
  display: flex;
  flex-direction: column;
}

.g-islands {
  padding: 2px 0 2px 5px;
}

.isl-row {
  display: flex;
  gap: 16px;
  margin-top: 2px;
}

.isl svg {
  display: block;
}

.isl-label {
  height: 10px;
}

.g-ret {
  margin-top: 2.500px;
  padding: 2px 0 2px 5px;
}

.obj {
  height: 11px;
  margin-top: 1px;
}

.obj label {
  width: 42px !important;
}

.g-set {
  margin-top: 3.500px;
  padding-bottom: 2px;
}

.set-line {
  display: flex;
  align-items: center;
  gap: 5px;
  height: 14px;
  margin-top: -1px;
}

.set-line .select {
  background: #dedede;
}

.new-btn {
  width: 10px;
  height: 14px;
}

.newlab {
  margin-left: 4px;
  color: #444;
}

.g-gap {
  margin-top: 1px;
  padding-bottom: 1px;
}

.tol label {
  width: 41px !important;
}

.tol span {
  margin-left: 5px;
  color: #444;
}

.field.active {
  width: 32px;
  height: 10px;
  border-color: #3a8fc8;
}

.g-inh {
  margin-top: 2.500px;
  padding: 1px 0 2px 5px;
}

.dlg-foot {
  height: 20px;
  flex: none;
  padding: 0 6px 5px;
  display: flex;
  align-items: center;
  gap: 5px;
}

.foot-space {
  flex: 1;
}

.btn {
  width: 37px;
  height: 10px;
  padding: 0;
  border: 0.5px solid #c0c0c0;
  background: #e1e1e1;
  color: #444;
  font: 5.400px "Liberation Sans", Arial, sans-serif;
}

.btn.ok {
  border: 1px solid #1f7fc0;
}

.btn.dis {
  margin-left: 0;
  background: #cccccc;
  color: #8e8e8e;
}

.more {
  width: 11px;
  height: 11px;
  margin-left: -1px;
  border: 1px solid #888;
  border-radius: 50%;
  color: #111;
  font-size: 5px;
  line-height: 9px;
  text-align: center;
}

.spot {
  position: absolute;
  left: 483px;
  top: 288px;
  width: 21px;
  height: 21px;
  padding: 6px 0 0 8px;
  border-radius: 50%;
  background: radial-gradient(circle, rgba(244, 244, 110, 0.95) 60%, rgba(244, 244, 110, 0.3) 100%);
  line-height: 0;
}
</style>
